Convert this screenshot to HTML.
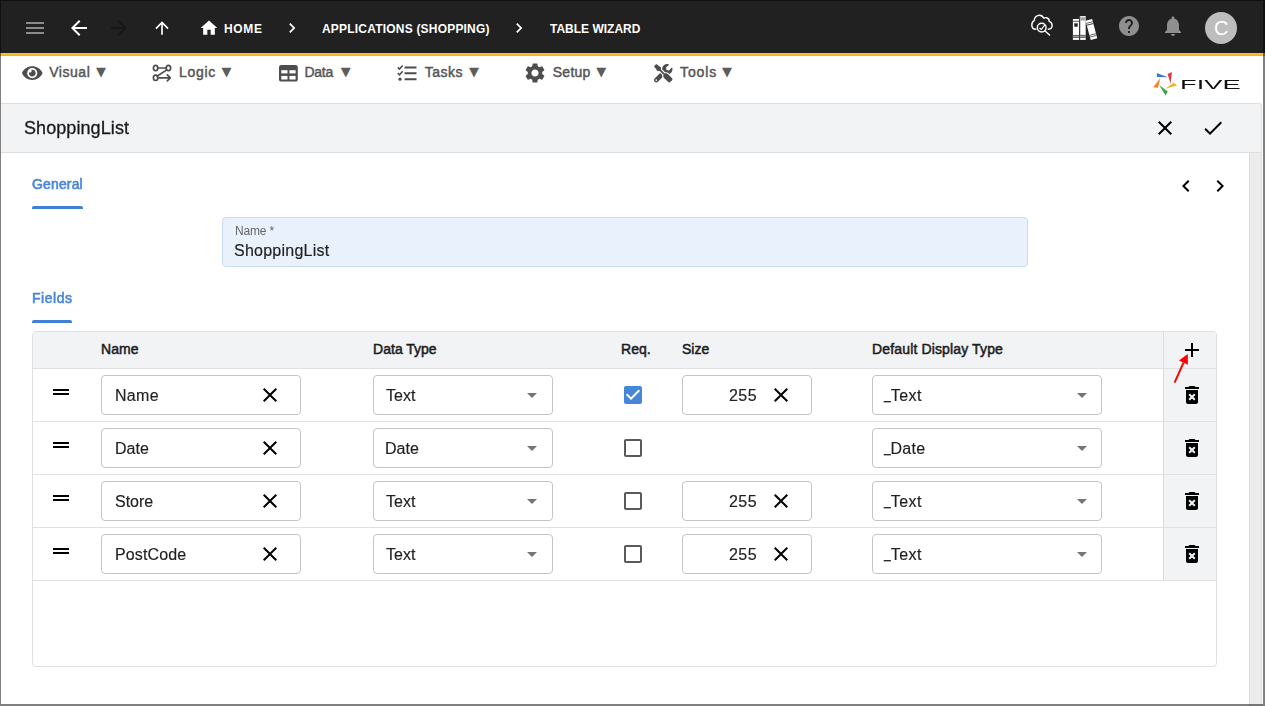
<!DOCTYPE html>
<html lang="en"><head><meta charset="utf-8"><title>Table Wizard</title>
<style>
*{box-sizing:border-box}
html,body{margin:0;padding:0}
body{width:1265px;height:706px;position:relative;overflow:hidden;background:#fff;font-family:"Liberation Sans",sans-serif;color:#212121}
.a,.i,.t{position:absolute}
.i{display:block;overflow:visible}
.t{white-space:nowrap;line-height:1}
.bc{font-size:12px;font-weight:bold;color:#fff}
.mn{font-size:14px;font-weight:normal;color:#555;-webkit-text-stroke:0.45px #555}
.ar{font-family:"DejaVu Sans",sans-serif;font-size:13px;color:#5c5c5c;font-weight:normal}
.tab{font-size:14px;font-weight:normal;color:#4a86d8;-webkit-text-stroke:0.6px #4a86d8}
.th{font-size:14px;font-weight:normal;color:#1c1c1c;-webkit-text-stroke:0.5px #1c1c1c}
.v{font-size:16px;color:#212121;-webkit-text-stroke:0.15px #212121}
.g{will-change:transform}
.box{position:absolute;height:40px;border:1px solid #c4c4c4;border-radius:4px;background:#fff}
.us{position:relative;top:-2px;display:inline-block;transform:scaleX(.75);transform-origin:0 0;margin-right:-2.600px}
.hl{position:absolute;height:1px;background:#e0e0e0}
</style></head><body>

<div class="a" style="left:0;top:0;width:1265px;height:53px;background:#212121"></div>
<div class="a" style="left:0;top:53px;width:1265px;height:3px;background:linear-gradient(#ffc130,#f3b11b)"></div>
<svg class="i" style="left:23px;top:16px" width="24" height="24" viewBox="0 0 24 24" fill="#8a8a8a"><path d="M3 18h18v-2H3v2zm0-5h18v-2H3v2zm0-7v2h18V6H3z"/></svg>
<svg class="i" style="left:67px;top:16px" width="24" height="24" viewBox="0 0 24 24" fill="#fff"><path d="M20 11H7.83l5.59-5.59L12 4l-8 8 8 8 1.41-1.41L7.83 13H20v-2z"/></svg>
<svg class="i" style="left:107px;top:16px" width="24" height="24" viewBox="0 0 24 24" fill="#171717"><path d="M12 4l-1.41 1.41L16.17 11H4v2h12.17l-5.58 5.59L12 20l8-8z"/></svg>
<svg class="i" style="left:152px;top:18px" width="20" height="20" viewBox="0 0 24 24" fill="#fff"><path d="M4 12l1.41 1.41L11 7.83V20h2V7.83l5.58 5.59L20 12l-8-8-8 8z"/></svg>
<svg class="i" style="left:199.3px;top:18.3px" width="20" height="20" viewBox="0 0 24 24" fill="#fff"><path d="M10 20v-6h4v6h5v-8h3L12 3 2 12h3v8z"/></svg>
<div class="t bc" id="t1" style="left:224.1px;top:23px;letter-spacing:0.60px;">HOME</div>
<svg class="i" style="left:282px;top:18px" width="20" height="20" viewBox="0 0 24 24" fill="#fff"><path d="M10 6L8.59 7.41 13.17 12l-4.58 4.59L10 18l6-6z"/></svg>
<div class="t bc" id="t2" style="left:322.0px;top:23px;letter-spacing:0.20px;">APPLICATIONS (SHOPPING)</div>
<svg class="i" style="left:508.6px;top:18px" width="20" height="20" viewBox="0 0 24 24" fill="#fff"><path d="M10 6L8.59 7.41 13.17 12l-4.58 4.59L10 18l6-6z"/></svg>
<div class="t bc" id="t3" style="left:550.0px;top:23px;">TABLE WIZARD</div>
<svg class="i" style="left:1029px;top:12px" width="26" height="26" viewBox="0 0 26 26" fill="none" stroke="#fff" stroke-width="1.400" stroke-linecap="round" stroke-linejoin="round">
<path d="M6.800 17.300C4.300 17.100 2.800 15.200 2.800 12.900C2.800 10.800 3.900 9.200 5.200 8.600C5.200 5.500 7.600 3.200 10.600 3.200C12.400 3.200 13.900 4.400 14.800 6.200C15.500 5.800 16.400 5.600 17.400 5.700C19.200 6 20.200 7.500 20.200 9.300C22 9.900 23.100 11.400 23.100 13.300C23.100 15.600 21.500 17.200 19.300 17.300"/>
<circle cx="12.700" cy="15.600" r="4.400"/><path d="M16 18.900L20.600 23.100"/><path d="M10.800 16.300l1.500 1.200 3.300-4.400" stroke-width="1.200"/></svg>
<svg class="i" style="left:1072px;top:15px" width="26" height="26" viewBox="0 0 26 26">
<rect x=".9" y="4" width="6.300" height="20.900" fill="#fff"/><rect x=".9" y="5.800" width="6.300" height=".8" fill="#333"/><rect x="2.300" y="8.300" width="3.400" height="3.400" fill="#212121"/>
<rect x="7.900" y="1.100" width="5.800" height="23.800" fill="#fff"/><rect x="7.900" y="2.200" width="5.800" height="3.400" fill="#a6a6a6"/><rect x="7.900" y="1.100" width=".8" height="23.800" fill="#b5b5b5"/>
<rect x=".9" y="19.900" width="12.800" height="3.100" fill="#444"/><rect x=".9" y="20.600" width="12.800" height="1.800" fill="#a0a0a0"/><rect x="7.200" y="4" width=".7" height="20.900" fill="#212121"/>
<g transform="rotate(-15 19.400 14.500)"><rect x="16" y="4.600" width="6.800" height="19.800" fill="#fff"/><rect x="16" y="6.800" width="6.800" height=".8" fill="#444"/><rect x="16" y="8.800" width="6.800" height=".8" fill="#444"/><rect x="16" y="19.200" width="6.800" height=".8" fill="#444"/><rect x="16" y="21.200" width="6.800" height=".8" fill="#444"/></g></svg>
<svg class="i" style="left:1117px;top:14px" width="24" height="24" viewBox="0 0 24 24" fill="#8f8f8f"><path d="M12 2C6.48 2 2 6.48 2 12s4.48 10 10 10 10-4.48 10-10S17.52 2 12 2zm1 17h-2v-2h2v2zm2.07-7.75l-.9.92C13.45 12.9 13 13.5 13 15h-2v-.5c0-1.1.45-2.100 1.17-2.830l1.24-1.260c.37-.36.59-.86.59-1.410 0-1.100-.9-2-2-2s-2 .9-2 2H8c0-2.210 1.790-4 4-4s4 1.790 4 4c0 .88-.36 1.680-.93 2.250z"/></svg>
<svg class="i" style="left:1161px;top:14px" width="24" height="24" viewBox="0 0 24 24" fill="#8f8f8f"><path d="M12 22c1.1 0 2-.9 2-2h-4c0 1.1.89 2 2 2zm6-6v-5c0-3.070-1.640-5.640-4.500-6.320V4c0-.83-.67-1.500-1.500-1.500s-1.500.67-1.500 1.500v.68C7.630 5.360 6 7.920 6 11v5l-2 2v1h16v-1l-2-2z"/></svg>
<div class="a" style="left:1205px;top:12px;width:32px;height:32px;border-radius:50%;background:#bdbdbd"></div>
<div class="t " id="t4" style="left:1214px;top:18px;font-size:20px;color:#fff">C</div>
<div class="t mn" id="t5" style="left:49.2px;top:64.5px;letter-spacing:0.54px;">Visual</div>
<div class="t ar" id="t6" style="left:96px;top:65px;">▼</div>
<div class="t mn" id="t7" style="left:179.1px;top:64.5px;letter-spacing:0.68px;">Logic</div>
<div class="t ar" id="t8" style="left:221.4px;top:65px;">▼</div>
<div class="t mn" id="t9" style="left:304.5px;top:64.5px;letter-spacing:-0.30px;">Data</div>
<div class="t ar" id="t10" style="left:340.8px;top:65px;">▼</div>
<div class="t mn" id="t11" style="left:424.8px;top:64.5px;letter-spacing:0.45px;">Tasks</div>
<div class="t ar" id="t12" style="left:469px;top:65px;">▼</div>
<div class="t mn" id="t13" style="left:552.8px;top:64.5px;letter-spacing:0.23px;">Setup</div>
<div class="t ar" id="t14" style="left:596.3px;top:65px;">▼</div>
<div class="t mn" id="t15" style="left:680.0px;top:64.5px;letter-spacing:0.90px;">Tools</div>
<div class="t ar" id="t16" style="left:721.9px;top:65px;">▼</div>
<svg class="i" style="left:21.600px;top:65.500px" width="20.500" height="14.200" viewBox="0 0 576 400" fill="#4d4d4d"><path d="M572.500 183C518.300 77.200 410.900 8 288 8S57.700 77.200 3.500 183a32.400 32.400 0 0 0 0 29.200C57.700 322.800 165.100 392 288 392s230.300-69.200 284.500-179.800a32.400 32.400 0 0 0 0-29.200zM288 344a144 144 0 1 1 144-144 144 144 0 0 1-144 144zm0-240a95.300 95.300 0 0 0-25.300 3.800 47.900 47.900 0 0 1-66.900 66.900A95.800 95.800 0 1 0 288 104z"/></svg>
<svg class="i" style="left:151px;top:62px" width="22" height="22" viewBox="0 0 22 22" fill="none" stroke="#4d4d4d" stroke-width="1.700" stroke-linecap="round" stroke-linejoin="round"><ellipse cx="4.600" cy="6" rx="2.200" ry="2.700"/><ellipse cx="17.400" cy="6" rx="2.200" ry="2.700"/><ellipse cx="4.600" cy="15.800" rx="2.200" ry="2.700"/><path d="M6.800 6h8.400M15.800 7.900L6.300 14M6.800 15.800h12M16.300 12.800l3 3-3 3"/></svg>
<svg class="i" style="left:278.600px;top:64.500px" width="19" height="17" viewBox="0 0 19 17"><rect x="0" y="0" width="18.800" height="16.600" rx="2.200" fill="#4d4d4d"/><rect x="2.300" y="5.200" width="6.200" height="3.200" fill="#fff"/><rect x="10.400" y="5.200" width="6.200" height="3.200" fill="#fff"/><rect x="2.300" y="10.900" width="6.200" height="3.600" fill="#fff"/><rect x="10.400" y="10.900" width="6.200" height="3.600" fill="#fff"/></svg>
<svg class="i" style="left:397px;top:64px" width="20" height="18" viewBox="0 0 20 18" fill="none" stroke="#4d4d4d" stroke-width="1.800"><path d="M7.600 3.500h11.900M7.600 9.200h11.900M7.600 15.200h11.900" stroke-width="2"/><path d="M.8 3.400l1.700 1.700 3.200-3.600M.8 9.100l1.700 1.700 3.200-3.600" stroke-width="1.500"/><circle cx="3" cy="15.200" r="1.600" fill="#4d4d4d" stroke="none"/></svg>
<svg class="i" style="left:523px;top:61px" width="24" height="24" viewBox="0 0 24 24" fill="#4d4d4d"><path d="M19.14 12.94c.04-.3.06-.61.06-.94 0-.32-.02-.64-.07-.94l2.030-1.580c.18-.14.23-.41.12-.61l-1.920-3.320c-.12-.22-.37-.29-.59-.22l-2.390.96c-.5-.38-1.030-.7-1.620-.94l-.36-2.540c-.04-.24-.24-.41-.48-.41h-3.840c-.24 0-.43.17-.47.41l-.36 2.540c-.59.24-1.130.57-1.620.94l-2.390-.96c-.22-.08-.47 0-.59.22L2.740 8.870c-.12.21-.08.47.12.61l2.030 1.580c-.05.3-.09.63-.09.94s.02.64.07.94l-2.030 1.580c-.18.14-.23.41-.12.61l1.920 3.320c.12.22.37.29.59.22l2.390-.96c.5.38 1.030.7 1.620.94l.36 2.540c.05.24.24.41.48.41h3.840c.24 0 .44-.17.47-.41l.36-2.540c.59-.24 1.130-.56 1.620-.94l2.390.96c.22.08.47 0 .59-.22l1.920-3.320c.12-.22.07-.47-.12-.61l-2.010-1.580zM12 15.600c-1.980 0-3.600-1.620-3.600-3.600s1.620-3.600 3.600-3.600 3.600 1.620 3.600 3.600-1.620 3.600-3.600 3.600z"/></svg>
<svg class="i" style="left:653.700px;top:63.600px" width="18.500" height="18.500" viewBox="0 0 512 512" fill="#4d4d4d"><path d="M501.100 395.700L384 278.600c-23.100-23.100-57.600-27.600-85.400-13.900L192 158.100V96L64 0 0 64l96 128h62.100l106.600 106.600c-13.600 27.800-9.200 62.300 13.900 85.400l117.100 117.100c14.600 14.600 38.200 14.600 52.700 0l52.700-52.700c14.500-14.600 14.500-38.200 0-52.700zM331.700 225c28.300 0 54.900 11 74.900 31l19.400 19.400c15.800-6.900 30.800-16.500 43.800-29.500 37.100-37.100 49.700-89.300 37.900-136.700-2.200-9-13.500-12.100-20.100-5.500l-74.400 74.400-67.900-11.300L334 98.900l74.400-74.400c6.600-6.600 3.400-17.900-5.700-20.200-47.400-11.700-99.600.9-136.600 37.900-28.500 28.500-41.900 66.100-41.200 103.600l82.100 82.100c8.100-1.900 16.500-2.900 24.700-2.900zm-103.900 82l-56.700-56.700L18.700 402.800c-25 25-25 65.500 0 90.500s65.500 25 90.500 0l123.600-123.600c-7.600-19.900-9.900-41.600-5-62.700zM64 472c-13.200 0-24-10.800-24-24 0-13.300 10.700-24 24-24s24 10.700 24 24c0 13.200-10.700 24-24 24z"/></svg>
<svg class="i g" style="left:1150px;top:68px" width="100" height="32" viewBox="1150 68 100 32"><polygon points="1156.800,72.900 1157,77.100 1167.800,77.300" fill="#3a78d6"/><polygon points="1171.900,72 1167.600,73.900 1170.600,83.700" fill="#e03a3a"/><polygon points="1173.600,82.700 1177.200,85.400 1165.300,88.800" fill="#f5b324"/><polygon points="1159.100,85 1167.800,91.400 1165.500,95.600" fill="#3da556"/><polygon points="1160.400,78 1157.900,87.800 1153.200,87.300" fill="#f58025"/>
<text x="1180.100" y="88.900" font-family="Liberation Sans, sans-serif" font-size="13.500" fill="#111" textLength="60.500" lengthAdjust="spacingAndGlyphs">FIVE</text></svg>
<div class="a" style="left:1px;top:103px;width:1261px;height:50px;background:#f1f3f5;border:1px solid #dedede;border-left:none;border-radius:0 3px 0 0"></div>
<div class="t g" id="t17" style="left:24.0px;top:118.5px;letter-spacing:0.08px;font-size:18px;color:#1a1a1a;-webkit-text-stroke:0.3px #1a1a1a">ShoppingList</div>
<svg class="i" style="left:1153px;top:116px" width="24" height="24" viewBox="0 0 24 24" fill="#000"><path d="M19 6.41L17.59 5 12 10.59 6.41 5 5 6.41 10.59 12 5 17.59 6.41 19 12 13.41 17.59 19 19 17.59 13.41 12z"/></svg>
<svg class="i" style="left:1201px;top:116px" width="24" height="24" viewBox="0 0 24 24" fill="#000"><path d="M9 16.17L4.83 12l-1.42 1.41L9 19 21 7l-1.41-1.41z"/></svg>
<div class="a" style="left:1249px;top:153px;width:13px;height:553px;background:#ececec;border-left:1px solid #dcdcdc;border-right:1px solid #dcdcdc"></div>
<div class="t tab g" id="t18" style="left:32.0px;top:177px;letter-spacing:0.15px;">General</div>
<div class="a" style="left:32px;top:206px;width:51px;height:3px;background:#3f7fd6;border-radius:2px 2px 0 0"></div>
<svg class="i" style="left:1174px;top:173.8px" width="24" height="24" viewBox="0 0 24 24" fill="#000"><path d="M15.41 7.41L14 6l-6 6 6 6 1.41-1.41L10.83 12z"/></svg>
<svg class="i" style="left:1207.6px;top:173.8px" width="24" height="24" viewBox="0 0 24 24" fill="#000"><path d="M10 6L8.59 7.41 13.17 12l-4.58 4.59L10 18l6-6z"/></svg>
<div class="a" style="left:222px;top:217px;width:806px;height:50px;background:#e8f1fc;border:1px solid #c9dcf2;border-radius:4px"></div>
<div class="t g" id="t19" style="left:234.6px;top:225px;letter-spacing:-0.18px;font-size:12px;color:#666">Name *</div>
<div class="t v g" id="t20" style="left:234.1px;top:243px;letter-spacing:0.25px;">ShoppingList</div>
<div class="t tab g" id="t21" style="left:32.0px;top:291px;letter-spacing:0.54px;">Fields</div>
<div class="a" style="left:32px;top:320px;width:40px;height:3px;background:#3f7fd6;border-radius:2px 2px 0 0"></div>
<div class="a" style="left:32px;top:331px;width:1185px;height:336px;border:1px solid #e0e0e0;border-radius:4px;overflow:hidden"><div class="a" style="left:0;top:0;width:1183px;height:37px;background:#f1f3f5"></div><div class="a" style="left:1130px;top:0;width:54px;height:249px;background:#f1f3f5;border-left:1px solid #dcdcdc"></div></div>
<div class="hl" style="left:33px;top:368px;width:1183px"></div>
<div class="hl" style="left:33px;top:421px;width:1183px"></div>
<div class="hl" style="left:33px;top:474px;width:1183px"></div>
<div class="hl" style="left:33px;top:527px;width:1183px"></div>
<div class="hl" style="left:33px;top:580px;width:1183px"></div>
<div class="t th" id="t22" style="left:101.1px;top:342px;">Name</div>
<div class="t th" id="t23" style="left:373.1px;top:342px;">Data Type</div>
<div class="t th" id="t24" style="left:621.1px;top:342px;">Req.</div>
<div class="t th" id="t25" style="left:682.0px;top:342px;">Size</div>
<div class="t th" id="t26" style="left:872.1px;top:342px;letter-spacing:0.14px;">Default Display Type</div>
<svg class="i" style="left:1180px;top:338px" width="24" height="24" viewBox="0 0 24 24" fill="#000"><path d="M19 13h-6v6h-2v-6H5v-2h6V5h2v6h6v2z"/></svg>
<svg class="i" style="left:49px;top:380px" width="24" height="24" viewBox="0 0 24 24" fill="#000"><path d="M20 9H4v2h16V9zM4 15h16v-2H4v2z"/></svg>
<div class="box" style="left:101px;top:375px;width:200px"></div>
<div class="t v g" id="t27" style="left:114.6px;top:388px;letter-spacing:0.30px;">Name</div>
<svg class="i" style="left:258px;top:383px" width="24" height="24" viewBox="0 0 24 24" fill="#000"><path d="M19 6.41L17.59 5 12 10.59 6.41 5 5 6.41 10.59 12 5 17.59 6.41 19 12 13.41 17.59 19 19 17.59 13.41 12z"/></svg>
<div class="box" style="left:373px;top:375px;width:180px"></div>
<div class="t v g" id="t28" style="left:385.5px;top:388px;">Text</div>
<svg class="i" style="left:520px;top:383px" width="24" height="24" viewBox="0 0 24 24" fill="#757575"><path d="M7 10l5 5 5-5z"/></svg>
<svg class="i" style="left:621px;top:383px" width="24" height="24" viewBox="0 0 24 24" fill="#4486d7"><path d="M19 3H5c-1.11 0-2 .9-2 2v14c0 1.1.89 2 2 2h14c1.11 0 2-.9 2-2V5c0-1.1-.89-2-2-2zm-9 14l-5-5 1.41-1.41L10 14.17l7.59-7.59L19 8l-9 9z"/></svg>
<div class="box" style="left:682px;top:375px;width:130px"></div>
<div class="t v g" id="t29" style="left:729.3px;top:388px;letter-spacing:0.45px;">255</div>
<svg class="i" style="left:769px;top:383px" width="24" height="24" viewBox="0 0 24 24" fill="#000"><path d="M19 6.41L17.59 5 12 10.59 6.41 5 5 6.41 10.59 12 5 17.59 6.41 19 12 13.41 17.59 19 19 17.59 13.41 12z"/></svg>
<div class="box" style="left:872px;top:375px;width:230px"></div>
<div class="t v g" id="t30" style="left:884.0px;top:388px;letter-spacing:0.45px;"><span class="us">_</span>Text</div>
<svg class="i" style="left:1070px;top:383px" width="24" height="24" viewBox="0 0 24 24" fill="#757575"><path d="M7 10l5 5 5-5z"/></svg>
<svg class="i" style="left:1180px;top:383px" width="24" height="24" viewBox="0 0 24 24" fill="#000"><path d="M6 19c0 1.1.9 2 2 2h8c1.1 0 2-.9 2-2V7H6v12zm2.46-7.12l1.41-1.41L12 12.59l2.12-2.12 1.41 1.41L13.41 14l2.12 2.12-1.41 1.41L12 15.41l-2.12 2.12-1.41-1.41L10.59 14l-2.13-2.12zM15.5 4l-1-1h-5l-1 1H5v2h14V4z"/></svg>
<svg class="i" style="left:49px;top:433px" width="24" height="24" viewBox="0 0 24 24" fill="#000"><path d="M20 9H4v2h16V9zM4 15h16v-2H4v2z"/></svg>
<div class="box" style="left:101px;top:428px;width:200px"></div>
<div class="t v g" id="t31" style="left:114.6px;top:441px;">Date</div>
<svg class="i" style="left:258px;top:436px" width="24" height="24" viewBox="0 0 24 24" fill="#000"><path d="M19 6.41L17.59 5 12 10.59 6.41 5 5 6.41 10.59 12 5 17.59 6.41 19 12 13.41 17.59 19 19 17.59 13.41 12z"/></svg>
<div class="box" style="left:373px;top:428px;width:180px"></div>
<div class="t v g" id="t32" style="left:384.6px;top:441px;">Date</div>
<svg class="i" style="left:520px;top:436px" width="24" height="24" viewBox="0 0 24 24" fill="#757575"><path d="M7 10l5 5 5-5z"/></svg>
<svg class="i" style="left:621px;top:436px" width="24" height="24" viewBox="0 0 24 24" fill="#5a5a5a"><path d="M19 5v14H5V5h14m0-2H5c-1.1 0-2 .9-2 2v14c0 1.1.9 2 2 2h14c1.1 0 2-.9 2-2V5c0-1.1-.9-2-2-2z"/></svg>
<div class="box" style="left:872px;top:428px;width:230px"></div>
<div class="t v g" id="t33" style="left:884.0px;top:441px;letter-spacing:0.23px;"><span class="us">_</span>Date</div>
<svg class="i" style="left:1070px;top:436px" width="24" height="24" viewBox="0 0 24 24" fill="#757575"><path d="M7 10l5 5 5-5z"/></svg>
<svg class="i" style="left:1180px;top:436px" width="24" height="24" viewBox="0 0 24 24" fill="#000"><path d="M6 19c0 1.1.9 2 2 2h8c1.1 0 2-.9 2-2V7H6v12zm2.46-7.12l1.41-1.41L12 12.59l2.12-2.12 1.41 1.41L13.41 14l2.12 2.12-1.41 1.41L12 15.41l-2.12 2.12-1.41-1.41L10.59 14l-2.13-2.12zM15.5 4l-1-1h-5l-1 1H5v2h14V4z"/></svg>
<svg class="i" style="left:49px;top:486px" width="24" height="24" viewBox="0 0 24 24" fill="#000"><path d="M20 9H4v2h16V9zM4 15h16v-2H4v2z"/></svg>
<div class="box" style="left:101px;top:481px;width:200px"></div>
<div class="t v g" id="t34" style="left:114.6px;top:494px;">Store</div>
<svg class="i" style="left:258px;top:489px" width="24" height="24" viewBox="0 0 24 24" fill="#000"><path d="M19 6.41L17.59 5 12 10.59 6.41 5 5 6.41 10.59 12 5 17.59 6.41 19 12 13.41 17.59 19 19 17.59 13.41 12z"/></svg>
<div class="box" style="left:373px;top:481px;width:180px"></div>
<div class="t v g" id="t35" style="left:385.5px;top:494px;">Text</div>
<svg class="i" style="left:520px;top:489px" width="24" height="24" viewBox="0 0 24 24" fill="#757575"><path d="M7 10l5 5 5-5z"/></svg>
<svg class="i" style="left:621px;top:489px" width="24" height="24" viewBox="0 0 24 24" fill="#5a5a5a"><path d="M19 5v14H5V5h14m0-2H5c-1.1 0-2 .9-2 2v14c0 1.1.9 2 2 2h14c1.1 0 2-.9 2-2V5c0-1.1-.9-2-2-2z"/></svg>
<div class="box" style="left:682px;top:481px;width:130px"></div>
<div class="t v g" id="t36" style="left:729.3px;top:494px;letter-spacing:0.45px;">255</div>
<svg class="i" style="left:769px;top:489px" width="24" height="24" viewBox="0 0 24 24" fill="#000"><path d="M19 6.41L17.59 5 12 10.59 6.41 5 5 6.41 10.59 12 5 17.59 6.41 19 12 13.41 17.59 19 19 17.59 13.41 12z"/></svg>
<div class="box" style="left:872px;top:481px;width:230px"></div>
<div class="t v g" id="t37" style="left:884.0px;top:494px;letter-spacing:0.45px;"><span class="us">_</span>Text</div>
<svg class="i" style="left:1070px;top:489px" width="24" height="24" viewBox="0 0 24 24" fill="#757575"><path d="M7 10l5 5 5-5z"/></svg>
<svg class="i" style="left:1180px;top:489px" width="24" height="24" viewBox="0 0 24 24" fill="#000"><path d="M6 19c0 1.1.9 2 2 2h8c1.1 0 2-.9 2-2V7H6v12zm2.46-7.12l1.41-1.41L12 12.59l2.12-2.12 1.41 1.41L13.41 14l2.12 2.12-1.41 1.41L12 15.41l-2.12 2.12-1.41-1.41L10.59 14l-2.13-2.12zM15.5 4l-1-1h-5l-1 1H5v2h14V4z"/></svg>
<svg class="i" style="left:49px;top:539px" width="24" height="24" viewBox="0 0 24 24" fill="#000"><path d="M20 9H4v2h16V9zM4 15h16v-2H4v2z"/></svg>
<div class="box" style="left:101px;top:534px;width:200px"></div>
<div class="t v g" id="t38" style="left:114.6px;top:547px;letter-spacing:0.13px;">PostCode</div>
<svg class="i" style="left:258px;top:542px" width="24" height="24" viewBox="0 0 24 24" fill="#000"><path d="M19 6.41L17.59 5 12 10.59 6.41 5 5 6.41 10.59 12 5 17.59 6.41 19 12 13.41 17.59 19 19 17.59 13.41 12z"/></svg>
<div class="box" style="left:373px;top:534px;width:180px"></div>
<div class="t v g" id="t39" style="left:385.5px;top:547px;">Text</div>
<svg class="i" style="left:520px;top:542px" width="24" height="24" viewBox="0 0 24 24" fill="#757575"><path d="M7 10l5 5 5-5z"/></svg>
<svg class="i" style="left:621px;top:542px" width="24" height="24" viewBox="0 0 24 24" fill="#5a5a5a"><path d="M19 5v14H5V5h14m0-2H5c-1.1 0-2 .9-2 2v14c0 1.1.9 2 2 2h14c1.1 0 2-.9 2-2V5c0-1.1-.9-2-2-2z"/></svg>
<div class="box" style="left:682px;top:534px;width:130px"></div>
<div class="t v g" id="t40" style="left:729.3px;top:547px;letter-spacing:0.45px;">255</div>
<svg class="i" style="left:769px;top:542px" width="24" height="24" viewBox="0 0 24 24" fill="#000"><path d="M19 6.41L17.59 5 12 10.59 6.41 5 5 6.41 10.59 12 5 17.59 6.41 19 12 13.41 17.59 19 19 17.59 13.41 12z"/></svg>
<div class="box" style="left:872px;top:534px;width:230px"></div>
<div class="t v g" id="t41" style="left:884.0px;top:547px;letter-spacing:0.45px;"><span class="us">_</span>Text</div>
<svg class="i" style="left:1070px;top:542px" width="24" height="24" viewBox="0 0 24 24" fill="#757575"><path d="M7 10l5 5 5-5z"/></svg>
<svg class="i" style="left:1180px;top:542px" width="24" height="24" viewBox="0 0 24 24" fill="#000"><path d="M6 19c0 1.1.9 2 2 2h8c1.1 0 2-.9 2-2V7H6v12zm2.46-7.12l1.41-1.41L12 12.59l2.12-2.12 1.41 1.41L13.41 14l2.12 2.12-1.41 1.41L12 15.41l-2.12 2.12-1.41-1.41L10.59 14l-2.13-2.12zM15.5 4l-1-1h-5l-1 1H5v2h14V4z"/></svg>
<svg class="i" style="left:1165px;top:345px" width="40" height="45" viewBox="1165 345 40 45"><path d="M1174.600 382.600L1183.500 362.600" stroke="#ff0000" stroke-width="2" fill="none"/><polygon points="1187.800,353.900 1179,360.600 1187.900,364.700" fill="#ff0000"/></svg>
<div class="a" style="left:0;top:0;width:1265px;height:1px;background:rgba(0,0,0,.5)"></div>
<div class="a" style="left:0;top:1px;width:1px;height:705px;background:rgba(0,0,0,.5)"></div>
<div class="a" style="left:1263px;top:1px;width:2px;height:705px;background:rgba(0,0,0,.5)"></div>
<div class="a" style="left:1px;top:704px;width:1262px;height:2px;background:rgba(0,0,0,.5)"></div>
</body></html>
